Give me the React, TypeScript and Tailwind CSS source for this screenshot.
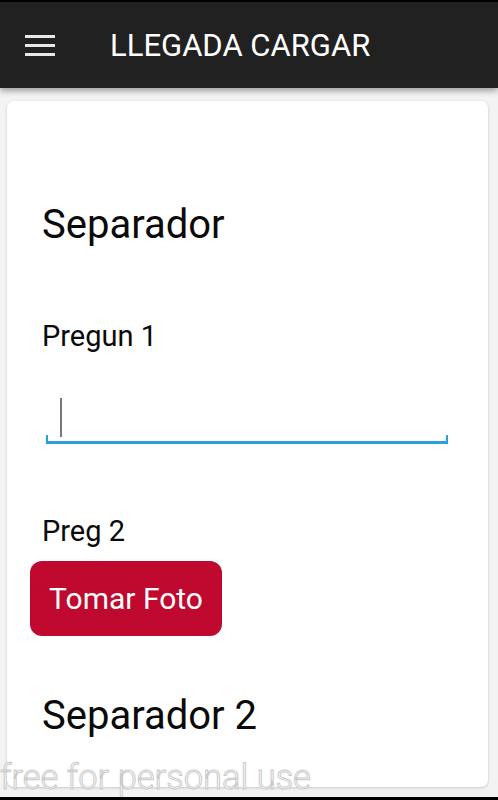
import React from "react";

const Menu = () => (
  <div className="flex flex-col gap-[6px] w-[30px]">
    <span className="block h-[3px] bg-[#e8e8e8]" />
    <span className="block h-[3px] bg-[#e8e8e8]" />
    <span className="block h-[3px] bg-[#e8e8e8]" />
  </div>
);

export default function App() {
  return (
    <div className="relative h-[800px] w-[498px] overflow-hidden bg-[#f3f3f3] font-['Roboto',sans-serif] text-[#0a0a0a]">
      {/* top bar */}
      <div className="relative z-10 flex h-[88px] items-center border-t-2 border-black bg-[#212121] pl-[25px] shadow-[0_3px_6px_rgba(0,0,0,0.35)]">
        <Menu />
        <h1 className="ml-[55px] text-[31px] leading-none text-white">LLEGADA CARGAR</h1>
      </div>

      {/* card */}
      <div className="mx-[7px] mt-[13px] h-[686px] w-[481px] rounded-[7px] bg-white pl-[35px] pr-[39px] pt-[101px] shadow-[0_1px_3px_rgba(0,0,0,0.18)]">
        <h2 className="text-[40px] leading-[46px]">Separador</h2>

        <p className="mt-[71px] text-[29px] leading-[34px]">Pregun 1</p>

        <div className="relative ml-1 mt-[40px] h-[51px] w-[402px] border-b-[3px] border-[#2a9fd8]">
          <span className="absolute bottom-0 left-0 h-[6px] w-[2px] bg-[#2a9fd8]" />
          <span className="absolute bottom-0 right-0 h-[6px] w-[2px] bg-[#2a9fd8]" />
          <span className="absolute left-[14px] top-[5px] h-[39px] w-[2px] bg-[#777]" />
        </div>

        <p className="mt-[70px] text-[29px] leading-[34px]">Preg 2</p>

        <button className="-ml-[12px] mt-[13px] flex h-[75px] w-[192px] items-center justify-center rounded-[12px] bg-[#c0092f] text-[30px] text-white">
          Tomar Foto
        </button>

        <h2 className="mt-[57px] text-[40px] leading-[46px]">Separador 2</h2>
      </div>

      {/* watermark */}
      <div className="absolute left-0 top-[754px] z-20 text-[34.5px] font-light leading-[46px] text-white [-webkit-text-stroke:1px_#c9c9c9]">
        free for personal use
      </div>

      {/* bottom edge */}
      <div className="absolute bottom-0 left-0 h-[3px] w-full bg-black" />
    </div>
  );
}
